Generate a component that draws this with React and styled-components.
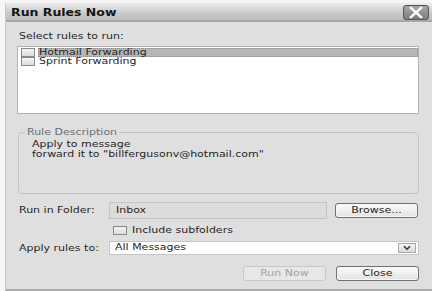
import React from "react";
import styled, { createGlobalStyle } from "styled-components";

const GlobalStyle = createGlobalStyle`
  html, body {
    margin: 0;
    padding: 0;
    background: #f6f6f6;
  }
  body {
    font-family: "DejaVu Sans", Verdana, sans-serif;
    font-size: 11px;
    color: #252525;
  }
`;

const rules = [
  { id: 1, name: "Hotmail Forwarding", selected: true },
  { id: 2, name: "Sprint Forwarding", selected: false },
];

function App() {
  return (
    <>
      <GlobalStyle />
      <Window>
        <TitleBar>
          <Title>
            <Txt $squash={0.86}>Run Rules Now</Txt>
          </Title>
          <CloseBox aria-label="Close">
            <svg width="26" height="15" viewBox="0 0 26 15">
              <path
                d="M7.5 2.5 L18.5 12.5 M18.5 2.5 L7.5 12.5"
                stroke="#fff"
                strokeWidth="2.6"
                strokeLinecap="square"
                fill="none"
              />
            </svg>
          </CloseBox>
        </TitleBar>
        <Body>
          <Label>
            <Txt>Select rules to run:</Txt>
          </Label>
          <RuleList>
            {rules.map((rule) => (
              <RuleRow key={rule.id}>
                <CheckBox />
                <RuleName $selected={rule.selected}>
                  <Txt>{rule.name}</Txt>
                </RuleName>
              </RuleRow>
            ))}
          </RuleList>

          <GroupBox>
            <Legend>
              <Txt>Rule Description</Txt>
            </Legend>
            <DescLine>
              <Txt>Apply to message</Txt>
            </DescLine>
            <DescLine>
              <Txt>forward it to "billfergusonv@hotmail.com"</Txt>
            </DescLine>
          </GroupBox>

          <FormRow $top={8} $height={17}>
            <RowLabel>
              <Txt>Run in Folder:</Txt>
            </RowLabel>
            <ReadOnlyField>
              <Txt>Inbox</Txt>
            </ReadOnlyField>
            <Button>
              <Txt>Browse...</Txt>
            </Button>
          </FormRow>

          <CheckRow>
            <CheckBox />
            <Txt>Include subfolders</Txt>
          </CheckRow>

          <FormRow $top={6} $height={14}>
            <RowLabel>
              <Txt>Apply rules to:</Txt>
            </RowLabel>
            <Select>
              <Txt>All Messages</Txt>
              <ArrowBox>
                <svg width="10" height="6" viewBox="0 0 10 6">
                  <path
                    d="M2 1.2 L5 4.2 L8 1.2"
                    stroke="#333"
                    strokeWidth="1.6"
                    fill="none"
                  />
                </svg>
              </ArrowBox>
            </Select>
          </FormRow>

          <ButtonRow>
            <Button disabled>
              <Txt>Run Now</Txt>
            </Button>
            <Button>
              <Txt>Close</Txt>
            </Button>
          </ButtonRow>
        </Body>
      </Window>
    </>
  );
}

// the dialog capture is squashed vertically, so glyphs are shorter than wide
const Txt = styled.span`
  display: inline-block;
  white-space: nowrap;
  transform: scaleY(${(p) => p.$squash || 0.74});
`;

const Window = styled.div`
  margin: 3px 0 0 5px;
  width: 427px;
  background: #dfdfdf;
  border-left: 1px solid #c9c9c9;
  border-bottom: 3px solid #ababab;
  box-sizing: border-box;
`;

const TitleBar = styled.div`
  height: 17px;
  display: flex;
  align-items: center;
  justify-content: space-between;
  padding: 0 3px 0 5px;
  background: linear-gradient(#ececec, #c9c9c9 60%, #bdbdbd);
  border-bottom: 2px solid #a6a6a6;
`;

const Title = styled.div`
  font-weight: bold;
  font-size: 12.5px;
  color: #151515;
  line-height: 17px;
  padding-top: 1px;
`;

const CloseBox = styled.div`
  width: 24px;
  height: 13px;
  border: 1px solid #555;
  border-radius: 3px;
  background: linear-gradient(#a9a9a9, #7c7c7c);
  display: flex;
  align-items: center;
  justify-content: center;
  margin-top: 2px;
  overflow: hidden;
`;

const Body = styled.div`
  padding: 9px 13px 8px 11px;
`;

const Label = styled.div`
  line-height: 12px;
  padding-left: 2px;
`;

const RuleList = styled.div`
  margin-top: 3px;
  height: 68px;
  box-sizing: border-box;
  background: #fff;
  border: 1px solid #b4b4b4;
  padding-top: 0.5px;
`;

const RuleRow = styled.div`
  display: flex;
  align-items: center;
  height: 9.5px;
  padding-left: 3px;
  gap: 3px;
`;

const CheckBox = styled.div`
  width: 12px;
  height: 7px;
  border: 1px solid #8a8a8a;
  background: linear-gradient(#f4f4f4, #dcdcdc);
  flex-shrink: 0;
`;

const RuleName = styled.div`
  flex: 1;
  height: 9.5px;
  line-height: 9.5px;
  padding-left: 1px;
  background: ${(p) => (p.$selected ? "#b6b6b6" : "transparent")};
  outline: ${(p) => (p.$selected ? "1px dotted #8c8c8c" : "none")};
  outline-offset: -1px;
`;

const GroupBox = styled.div`
  position: relative;
  margin: 18px 0 0 1px;
  height: 62px;
  box-sizing: border-box;
  border: 1px solid #c4c4c4;
  border-radius: 4px;
  padding: 7px 12px 0 13px;
`;

const Legend = styled.span`
  position: absolute;
  top: -6px;
  left: 6px;
  padding: 0 2px;
  line-height: 11px;
  background: #dfdfdf;
  color: #6e6e6e;
`;

const DescLine = styled.div`
  line-height: 9.5px;
  height: 9.5px;
`;

const FormRow = styled.div`
  display: flex;
  align-items: center;
  margin-top: ${(p) => p.$top}px;
  height: ${(p) => p.$height}px;
`;

const RowLabel = styled.div`
  width: 90px;
  padding-left: 2px;
  flex-shrink: 0;
`;

const ReadOnlyField = styled.div`
  width: 218px;
  height: 17px;
  box-sizing: border-box;
  border: 1px solid #c4c4c4;
  background: #dcdcdc;
  padding-left: 6px;
  line-height: 15px;
  margin-right: 8px;
`;

const Button = styled.button`
  width: 83px;
  height: 15px;
  padding: 0;
  font-family: inherit;
  font-size: 11px;
  line-height: 13px;
  color: ${(p) => (p.disabled ? "#a3a3a3" : "#222")};
  border: 1px solid ${(p) => (p.disabled ? "#c8c8c8" : "#6f6f6f")};
  border-radius: 3px;
  background: ${(p) =>
    p.disabled ? "#e7e7e7" : "linear-gradient(#fbfbfb, #e3e3e3)"};
  box-shadow: ${(p) => (p.disabled ? "none" : "inset 0 0 0 1px #f6f6f6")};
`;

const CheckRow = styled.div`
  display: flex;
  align-items: center;
  gap: 5px;
  margin: 7px 0 0 96px;
  height: 9px;
  line-height: 9px;
`;

const Select = styled.div`
  width: 310px;
  height: 14px;
  box-sizing: border-box;
  border: 1px solid #c6c6c6;
  background: #fff;
  display: flex;
  align-items: center;
  justify-content: space-between;
  padding: 0 2px 0 5px;
  line-height: 12px;
`;

const ArrowBox = styled.div`
  width: 18px;
  height: 10px;
  box-sizing: border-box;
  border: 1px solid #a9a9a9;
  background: linear-gradient(#f5f5f5, #d9d9d9);
  display: flex;
  align-items: center;
  justify-content: center;
`;

const ButtonRow = styled.div`
  display: flex;
  justify-content: flex-end;
  gap: 10px;
  margin-top: 11px;
`;

export default App;
